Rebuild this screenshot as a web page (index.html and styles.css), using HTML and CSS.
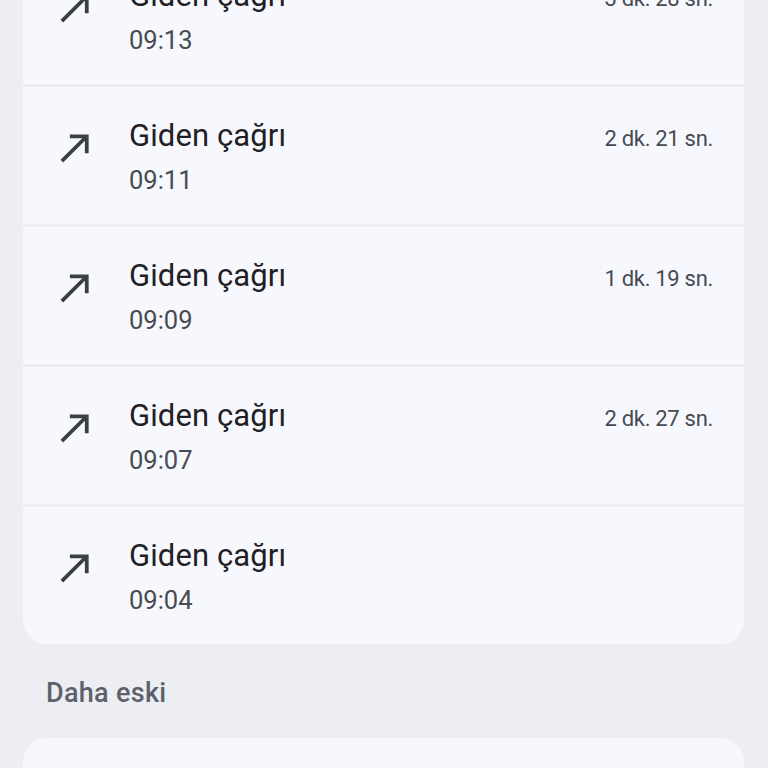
FILE: index.html
```html
<!DOCTYPE html>
<html lang="tr">
<head>
<meta charset="utf-8">
<link rel="stylesheet" href="styles.css">
</head>
<body>
<div class="page">
  <div class="group group-today">
    <div class="call">
      <svg class="icon" viewBox="0 0 24 24"><path d="M9 5v2h6.59L4 18.59 5.41 20 17 8.41V15h2V5z"/></svg>
      <div class="info">
        <div class="top"><span class="title">Giden çağrı</span><span class="dur">3 dk. 28 sn.</span></div>
        <div class="time">09:13</div>
      </div>
    </div>
    <div class="call">
      <svg class="icon" viewBox="0 0 24 24"><path d="M9 5v2h6.59L4 18.59 5.41 20 17 8.41V15h2V5z"/></svg>
      <div class="info">
        <div class="top"><span class="title">Giden çağrı</span><span class="dur">2 dk. 21 sn.</span></div>
        <div class="time">09:11</div>
      </div>
    </div>
    <div class="call">
      <svg class="icon" viewBox="0 0 24 24"><path d="M9 5v2h6.59L4 18.59 5.41 20 17 8.41V15h2V5z"/></svg>
      <div class="info">
        <div class="top"><span class="title">Giden çağrı</span><span class="dur">1 dk. 19 sn.</span></div>
        <div class="time">09:09</div>
      </div>
    </div>
    <div class="call">
      <svg class="icon" viewBox="0 0 24 24"><path d="M9 5v2h6.59L4 18.59 5.41 20 17 8.41V15h2V5z"/></svg>
      <div class="info">
        <div class="top"><span class="title">Giden çağrı</span><span class="dur">2 dk. 27 sn.</span></div>
        <div class="time">09:07</div>
      </div>
    </div>
    <div class="call">
      <svg class="icon" viewBox="0 0 24 24"><path d="M9 5v2h6.59L4 18.59 5.41 20 17 8.41V15h2V5z"/></svg>
      <div class="info">
        <div class="top"><span class="title">Giden çağrı</span></div>
        <div class="time">09:04</div>
      </div>
    </div>
  </div>
  <div class="section-head">Daha eski</div>
  <div class="group">
    <div class="call"></div>
  </div>
</div>
</body>
</html>
```
FILE: styles.css
```css
html, body {
  margin: 0;
  padding: 0;
  background: #eceef3;
  height: 768px;
  overflow: hidden;
}
.page {
  padding: 0 24px 0 23px;
  font-family: Roboto, "Noto Sans", sans-serif;
}
.group {
  display: flex;
  flex-direction: column;
  gap: 3px;
  border-radius: 24px;
  overflow: hidden;
}
.group-today {
  margin-top: -53px;
}
.call {
  background: #f7f8fd;
  height: 137px;
  box-sizing: border-box;
  padding: 31px 31px 29px 30px;
  display: flex;
  align-items: flex-start;
  gap: 31px;
}
.icon {
  width: 45px;
  height: 45px;
  margin-top: 7px;
  fill: #3b3e44;
  flex: none;
}
.info {
  flex: 1;
  display: flex;
  flex-direction: column;
}
.top {
  display: flex;
  justify-content: space-between;
  align-items: baseline;
}
.title {
  font-size: 31px;
  line-height: 36px;
  color: #1f2125;
  letter-spacing: 0.1px;
}
.dur {
  font-size: 22px;
  color: #464a52;
  letter-spacing: -0.3px;
}
.time {
  margin-top: 11px;
  font-size: 25.5px;
  line-height: 30px;
  color: #474b53;
}
.section-head {
  padding: 33px 23px 29px;
  font-size: 27px;
  line-height: 32px;
  font-weight: 500;
  letter-spacing: 0.3px;
  color: #5c616b;
}
```
